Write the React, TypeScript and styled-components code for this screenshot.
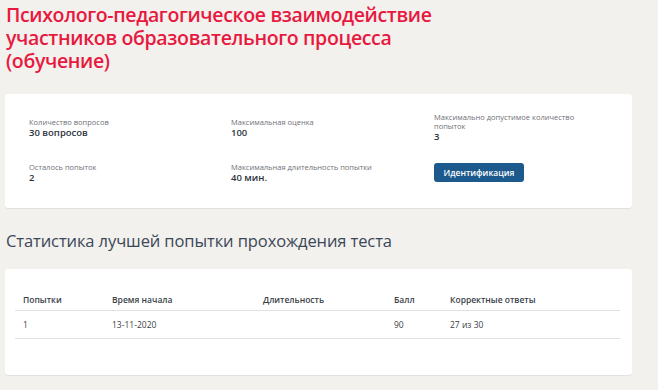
import React from "react";
import styled, { createGlobalStyle } from "styled-components";

const Global = createGlobalStyle`
  html, body { margin: 0; padding: 0; background: #f2f1ee; }
  body { font-family: "Open Sans", "Liberation Sans", sans-serif; }
`;

const Page = styled.div`
  width: 658px;
  height: 390px;
  overflow: hidden;
  padding: 0 26px 0 5px;
  box-sizing: border-box;
  display: flex;
  flex-direction: column;
`;

const Title = styled.h1`
  margin: 3px 0 0 1px;
  font-family: "Open Sans", sans-serif;
  font-weight: 600;
  font-size: 19.5px;
  line-height: 23px;
  color: #e8193f;
  letter-spacing: -0.35px;
`;

const Card = styled.div<{ $top: number; $h: number }>`
  margin-top: ${(p) => p.$top}px;
  height: ${(p) => p.$h}px;
  flex-shrink: 0;
  background: #fff;
  border-radius: 3px;
  box-shadow: 0 1px 0 #e2e1dd;
  box-sizing: border-box;
`;

const InfoGrid = styled.div`
  display: grid;
  grid-template-columns: 202px 203px 170px;
  grid-template-rows: 45px 40px;
  padding: 24px 0 0 24px;
`;

const Cell = styled.div<{ $shift?: number }>`
  display: flex;
  flex-direction: column;
  gap: 1px;
  margin-top: ${(p) => p.$shift ?? 0}px;
`;

const Label = styled.div`
  font-size: 7.5px;
  line-height: 9px;
  color: #6f6f78;
`;

const Value = styled.div`
  font-size: 9.5px;
  line-height: 10px;
  font-weight: 600;
  color: #2c3340;
`;

const Button = styled.button`
  margin-top: 0;
  width: 90px;
  height: 19px;
  border: none;
  border-radius: 3px;
  background: #1c5a8d;
  color: #fff;
  font-family: "Open Sans", sans-serif;
  font-size: 8.5px;
  font-weight: 600;
  padding: 0;
  cursor: pointer;
`;

const SectionTitle = styled.h2`
  margin: 23px 0 0 1px;
  font-family: "Open Sans", sans-serif;
  font-weight: 400;
  font-size: 16.5px;
  line-height: 20px;
  color: #3b4756;
  letter-spacing: -0.1px;
`;

const TableWrap = styled.div`
  padding: 20px 12px 0 10px;
`;

const Table = styled.table`
  width: 100%;
  table-layout: fixed;
  border-collapse: collapse;
  font-size: 8.5px;
  color: #2c3340;
`;

const Th = styled.th`
  box-sizing: border-box;
  text-align: left;
  font-weight: 600;
  padding: 0 0 0 8px;
  height: 21px;
  vertical-align: middle;
  border-bottom: 1px solid #e1e1e1;
  color: #3a3f48;
`;

const Td = styled.td`
  padding: 0 0 0 8px;
  height: 27px;
  border-bottom: 1px solid #e1e1e1;
  vertical-align: middle;
  color: #3a3f48;
`;

export default function App() {
  return (
    <>
      <Global />
      <Page>
        <Title>
          Психолого-педагогическое взаимодействие
          <br />
          участников образовательного процесса
          <br />
          (обучение)
        </Title>
        <Card $top={22} $h={114}>
          <InfoGrid>
            <Cell>
              <Label>Количество вопросов</Label>
              <Value>30 вопросов</Value>
            </Cell>
            <Cell>
              <Label>Максимальная оценка</Label>
              <Value>100</Value>
            </Cell>
            <Cell $shift={-5}>
              <Label>Максимально допустимое количество попыток</Label>
              <Value>3</Value>
            </Cell>
            <Cell>
              <Label>Осталось попыток</Label>
              <Value>2</Value>
            </Cell>
            <Cell>
              <Label>Максимальная длительность попытки</Label>
              <Value>40 мин.</Value>
            </Cell>
            <Cell>
              <Button>Идентификация</Button>
            </Cell>
          </InfoGrid>
        </Card>
        <SectionTitle>Статистика лучшей попытки прохождения теста</SectionTitle>
        <Card $top={18} $h={106}>
          <TableWrap>
            <Table>
              <colgroup>
                <col style={{ width: 89 }} />
                <col style={{ width: 151 }} />
                <col style={{ width: 131 }} />
                <col style={{ width: 56 }} />
                <col />
              </colgroup>
              <thead>
                <tr>
                  <Th>Попытки</Th>
                  <Th>Время начала</Th>
                  <Th>Длительность</Th>
                  <Th>Балл</Th>
                  <Th>Корректные ответы</Th>
                </tr>
              </thead>
              <tbody>
                <tr>
                  <Td>1</Td>
                  <Td>13-11-2020</Td>
                  <Td></Td>
                  <Td>90</Td>
                  <Td>27 из 30</Td>
                </tr>
              </tbody>
            </Table>
          </TableWrap>
        </Card>
      </Page>
    </>
  );
}
